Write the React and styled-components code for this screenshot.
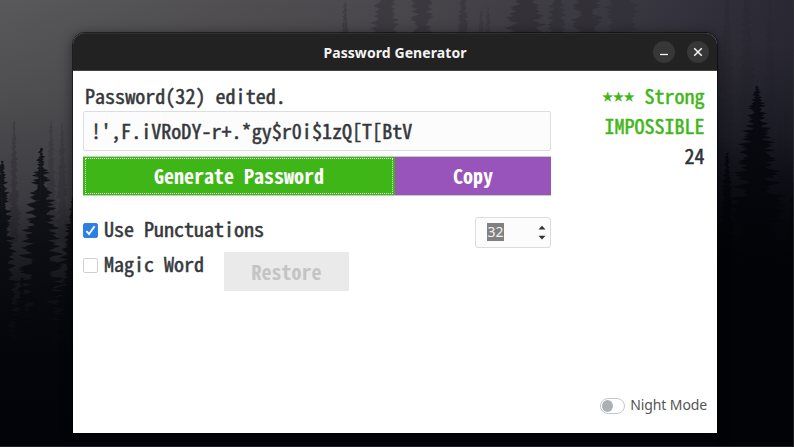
import React from "react";
import styled, { createGlobalStyle } from "styled-components";

const GlobalStyle = createGlobalStyle`
  *, *::before, *::after { box-sizing: border-box; }
  html, body { margin: 0; padding: 0; overflow: hidden; background: #05060a; }
`;

const Desktop = styled.div`
  position: relative;
  width: 794px;
  height: 447px;
  padding: 33px 77px 14px 73px;
  overflow: hidden;
`;

const Wallpaper = styled.svg`
  position: absolute;
  inset: 0;
  display: block;
`;

const Window = styled.main`
  position: relative;
  display: flex;
  flex-direction: column;
  width: 644px;
  height: 400px;
  border-radius: 12px 12px 0 0;
  background: #fff;
  box-shadow: 0 0 0 1px rgba(0, 0, 0, 0.5), 0 2px 12px 2px rgba(0, 0, 0, 0.4);
`;

const TitleBar = styled.header`
  display: grid;
  grid-template-columns: 80px 1fr 80px;
  align-items: center;
  height: 38px;
  flex: none;
  padding-top: 1px;
  border-radius: 12px 12px 0 0;
  background: #222;
  box-shadow: inset 0 1px 0 #303030;
  border-bottom: 1px solid #444;
`;

const Title = styled.h1`
  grid-column: 2;
  margin: 0;
  padding-top: 1px;
  text-align: center;
  white-space: nowrap;
  color: #f4f4f4;
  font: 700 14px/20px "Noto Sans", "Open Sans", sans-serif;
  letter-spacing: 0.08px;
`;

const WindowControls = styled.div`
  display: flex;
  justify-content: flex-end;
  gap: 12px;
  padding-right: 8px;
`;

const ControlButton = styled.button`
  display: grid;
  place-items: center;
  width: 22px;
  height: 22px;
  padding: 0;
  border: 0;
  border-radius: 50%;
  background: #373737;
`;

const Body = styled.div`
  display: flex;
  flex: 1;
  padding: 10px 12px 18px 10px;
  color: #34373b;
  font: 500 20px/30px "Noto Sans Mono CJK JP", "Noto Sans Mono CJK SC", "Liberation Mono", monospace;
  -webkit-text-stroke: 0.5px currentColor;
`;

const Form = styled.section`
  display: flex;
  flex-direction: column;
  width: 468px;
`;

const Status = styled.div`
  height: 30px;
  padding-left: 2px;
  line-height: 29px;
  letter-spacing: 0.04px;
  white-space: pre;
`;

const PasswordField = styled.div`
  display: flex;
  align-items: center;
  height: 40px;
  padding: 0 7px;
  border: 1px solid #dadde3;
  border-radius: 2px;
  background: #fcfcfc;
  letter-spacing: 0.04px;
  white-space: pre;
`;

const Actions = styled.div`
  display: flex;
  height: 40px;
  margin-top: 5px;
  -webkit-text-stroke: 0;
`;

const ActionButton = styled.button`
  width: ${(p) => p.$width}px;
  height: 100%;
  padding: 1px;
  border: 1px solid #c5cbc5;
  border-width: 1px 0;
  background: ${(p) => p.$color};
  color: #fff;
  font: inherit;
  font-weight: 700;
`;

const FocusRing = styled.span`
  display: flex;
  align-items: center;
  justify-content: center;
  height: 36px;
  margin: 0 1px;
  border: ${(p) => (p.$focused ? "1px dotted #e4f5df" : "1px solid transparent")};
`;

const Options = styled.div`
  display: grid;
  grid-template-columns: 141px 1fr 76px;
  grid-template-rows: 35px 39px;
  margin-top: 21px;
`;

const CheckLabel = styled.label`
  display: flex;
  align-items: center;
  gap: 6px;
  height: 26px;
  grid-column: ${(p) => p.$span};
  line-height: 28px;
  white-space: pre;
`;

const CheckBox = styled.span`
  display: grid;
  place-items: center;
  flex: none;
  width: 15px;
  height: 15px;
  border: 1px solid ${(p) => (p.$checked ? "#3185df" : "#d0d0d0")};
  border-radius: 2px;
  background: ${(p) => (p.$checked ? "#2a80e3" : "#fff")};
`;

const CheckText = styled.span`
  height: 30px;
`;

const SpinBox = styled.div`
  display: flex;
  align-items: center;
  justify-content: space-between;
  height: 31px;
  padding: 0 4px 0 11px;
  border: 1px solid #d8dce3;
  border-radius: 3px;
  background: #fcfcfc;
  -webkit-text-stroke: 0;
`;

const Selection = styled.span`
  display: block;
  width: 17px;
  height: 18px;
  margin-top: -1px;
  background: #808080;
  color: #f1f1f1;
  text-align: center;
  font: 14px/18px "Noto Sans", sans-serif;
`;

const RestoreButton = styled.button`
  grid-column: 2;
  width: 125px;
  height: 39px;
  padding: 0;
  border: 0;
  background: #eaeaea;
  color: #c4c4c4;
  font: inherit;
  font-weight: 700;
  -webkit-text-stroke: 0;
`;

const Summary = styled.aside`
  display: flex;
  flex: 1;
  flex-direction: column;
  align-items: flex-end;
`;

const Rating = styled.div`
  height: 30px;
  padding-right: 0.5px;
  color: ${(p) => (p.$strong ? "#3fb618" : "#2f3338")};
  line-height: 29px;
  white-space: pre;
`;

const Stars = styled.span`
  font: 12px/20px "DejaVu Sans", sans-serif;
  vertical-align: 3px;
`;

const NightMode = styled.label`
  display: flex;
  align-items: center;
  gap: 5px;
  height: 20px;
  margin: auto -2px 0 0;
  color: #555;
  font: 14px/20px "Noto Sans", sans-serif;
  letter-spacing: -0.12px;
  white-space: nowrap;
  -webkit-text-stroke: 0;
`;

const Toggle = styled.span`
  display: flex;
  align-items: center;
  width: 25px;
  height: 16px;
  padding-left: 1px;
  margin-top: 1px;
  border: 1px solid #c7c7c7;
  border-radius: 8px;

  &::before {
    content: "";
    width: 11px;
    height: 12px;
    border-radius: 50%;
    background: #adb0b2;
  }
`;

const noise = (n) => {
  const v = Math.sin(n * 127.1 + 11.7) * 43758.5453;
  return v - Math.floor(v);
};

// Conifer silhouette: a thin trunk with irregular drooping branches on each side.
function treePath(x, top, bottom, spread, seed) {
  let d = `M${x} ${top}L${x + 1.5} ${bottom}H${x - 1.5}Z`;
  for (let y = top + 4, i = 0; y < bottom; y += 2.6, i += 1) {
    const t = Math.min(1, (y - top) / 110);
    const reach = 1 + spread * Math.pow(t, 0.8);
    [-1, 1].forEach((side) => {
      const n = noise(seed * 3.7 + i * 2 + side);
      const length = reach * (0.4 + 0.75 * n);
      const lift = 3 * noise(seed + i * 5 + side) - 1;
      const thick = 1.3 + 2.4 * t;
      d += `M${x} ${(y - thick).toFixed(1)}Q${(x + side * length * 0.6).toFixed(1)} ${(y - thick * 0.5).toFixed(1)} ${(x + side * length).toFixed(1)} ${(y + lift).toFixed(1)}Q${(x + side * length * 0.6).toFixed(1)} ${(y + thick).toFixed(1)} ${x} ${(y + thick).toFixed(1)}Z`;
    });
  }
  return d;
}

const farTrees = [
  [14, 118, 240, 6, 3, 0.3], [51, 118, 240, 7, 8, 0.25], [62, 120, 240, 6, 13, 0.25],
  [345, 0, 60, 11, 23, 0.35], [385, -60, 60, 15, 33, 0.35], [422, -60, 60, 14, 43, 0.35],
  [463, -40, 60, 7, 53, 0.3], [481, 8, 60, 7, 63, 0.25], [488, 5, 60, 7, 68, 0.25], [525, -70, 60, 21, 73, 0.45],
  [557, -60, 60, 10, 83, 0.35], [587, -60, 60, 18, 93, 0.4], [622, -80, 60, 18, 103, 0.25],
  [727, -30, 230, 6, 113, 0.2], [747, -40, 230, 7, 123, 0.2], [770, -10, 230, 6, 133, 0.12],
  [780, 115, 300, 6, 143, 0.4], [786, 105, 300, 6, 153, 0.4],
];

const nearTrees = [
  [2, 158, 380, 15, 4], [41, 145, 380, 20, 14], [73, 195, 380, 19, 24], [22, 275, 380, 18, 34],
  [727, 150, 330, 10, 44], [757, 83, 330, 25, 54], [794, 180, 330, 12, 64],
];

function Forest() {
  return (
    <Wallpaper width="794" height="447" viewBox="0 0 794 447" aria-hidden="true">
      <defs>
        <linearGradient id="sky" x1="0" x2="1" y1="0" y2="0">
          <stop offset="0" stopColor="#59585a" />
          <stop offset="0.5" stopColor="#4a484c" />
          <stop offset="0.85" stopColor="#35333d" />
          <stop offset="1" stopColor="#292833" />
        </linearGradient>
        <linearGradient id="night" x1="0" x2="0" y1="0" y2="1">
          <stop offset="0" stopColor="#17161e" stopOpacity="0" />
          <stop offset="0.2" stopColor="#17161e" stopOpacity="0.15" />
          <stop offset="0.42" stopColor="#17161e" stopOpacity="0.4" />
          <stop offset="0.64" stopColor="#12131b" stopOpacity="0.7" />
          <stop offset="1" stopColor="#05060b" />
        </linearGradient>
        <linearGradient id="dusk" x1="0" x2="0" y1="0" y2="1">
          <stop offset="0.1" stopColor="#0d0f18" stopOpacity="0" />
          <stop offset="0.5" stopColor="#0b0d16" stopOpacity="0.85" />
          <stop offset="1" stopColor="#020306" />
        </linearGradient>
        <linearGradient id="ground" x1="0" x2="0" y1="0" y2="1">
          <stop offset="0.45" stopColor="#04050a" stopOpacity="0" />
          <stop offset="0.8" stopColor="#04050a" />
          <stop offset="1" stopColor="#030409" />
        </linearGradient>
        <linearGradient id="groundEast" x1="0" x2="0" y1="0" y2="1">
          <stop offset="0.3" stopColor="#020306" stopOpacity="0" />
          <stop offset="0.6" stopColor="#020306" />
        </linearGradient>
      </defs>
      <rect width="794" height="447" fill="url(#sky)" />
      {farTrees.map(([x, top, bottom, spread, seed, opacity]) => (
        <path key={seed} d={treePath(x, top, bottom, spread, seed)} fill="#25222a" opacity={opacity} />
      ))}
      <rect width="794" height="447" fill="url(#night)" />
      <rect x="717" width="77" height="447" fill="url(#dusk)" />
      {nearTrees.map(([x, top, bottom, spread, seed]) => (
        <path key={seed} d={treePath(x, top, bottom, spread, seed)} fill={x < 100 ? "#0d0e14" : "#07080e"} opacity="0.9" />
      ))}
      <rect width="794" height="447" fill="url(#ground)" />
      <rect x="717" width="77" height="447" fill="url(#groundEast)" />
      <path d="M0 446.5H793.5V0" fill="none" stroke="#34333c" strokeOpacity="0.6" />
    </Wallpaper>
  );
}

export default function App() {
  return (
    <>
      <GlobalStyle />
      <Desktop>
        <Forest />
        <Window>
          <TitleBar>
            <Title>Password Generator</Title>
            <WindowControls>
              <ControlButton aria-label="Minimize">
                <svg width="10" height="10" viewBox="0 0 10 10"><path d="M1 7.5h8" stroke="#f4f4f4" strokeWidth="1.3" /></svg>
              </ControlButton>
              <ControlButton aria-label="Close">
                <svg width="10" height="10" viewBox="0 0 10 10"><path d="M1.2 1.2l7.6 7.6M8.8 1.2L1.2 8.8" stroke="#f4f4f4" strokeWidth="1.5" /></svg>
              </ControlButton>
            </WindowControls>
          </TitleBar>
          <Body>
            <Form>
              <Status>Password(32) edited.</Status>
              <PasswordField>{"!',F.iVRoDY-r+.*gy$r0i$1zQ[T[BtV"}</PasswordField>
              <Actions>
                <ActionButton $width={312} $color="#3fb618"><FocusRing $focused>Generate Password</FocusRing></ActionButton>
                <ActionButton $width={156} $color="#9954bb"><FocusRing>Copy</FocusRing></ActionButton>
              </Actions>
              <Options>
                <CheckLabel $span="1 / 3">
                  <CheckBox $checked>
                    <svg width="13" height="13" viewBox="0 0 14 14"><path d="M2.6 7.7l2.8 3.2L11.4 2.4" fill="none" stroke="#fff" strokeWidth="2" /></svg>
                  </CheckBox>
                  <CheckText>Use Punctuations</CheckText>
                </CheckLabel>
                <SpinBox>
                  <Selection>32</Selection>
                  <svg width="8" height="15" viewBox="0 0 8 15"><path d="M0.5 4.5L4 0.8l3.5 3.7zM0.5 10.7L4 14.4l3.5-3.7z" fill="#333" /></svg>
                </SpinBox>
                <CheckLabel $span="1"><CheckBox /><CheckText>Magic Word</CheckText></CheckLabel>
                <RestoreButton disabled>Restore</RestoreButton>
              </Options>
            </Form>
            <Summary>
              <Rating $strong><Stars>★★★</Stars> Strong</Rating>
              <Rating $strong>IMPOSSIBLE</Rating>
              <Rating>24</Rating>
              <NightMode><Toggle />Night Mode</NightMode>
            </Summary>
          </Body>
        </Window>
      </Desktop>
    </>
  );
}
